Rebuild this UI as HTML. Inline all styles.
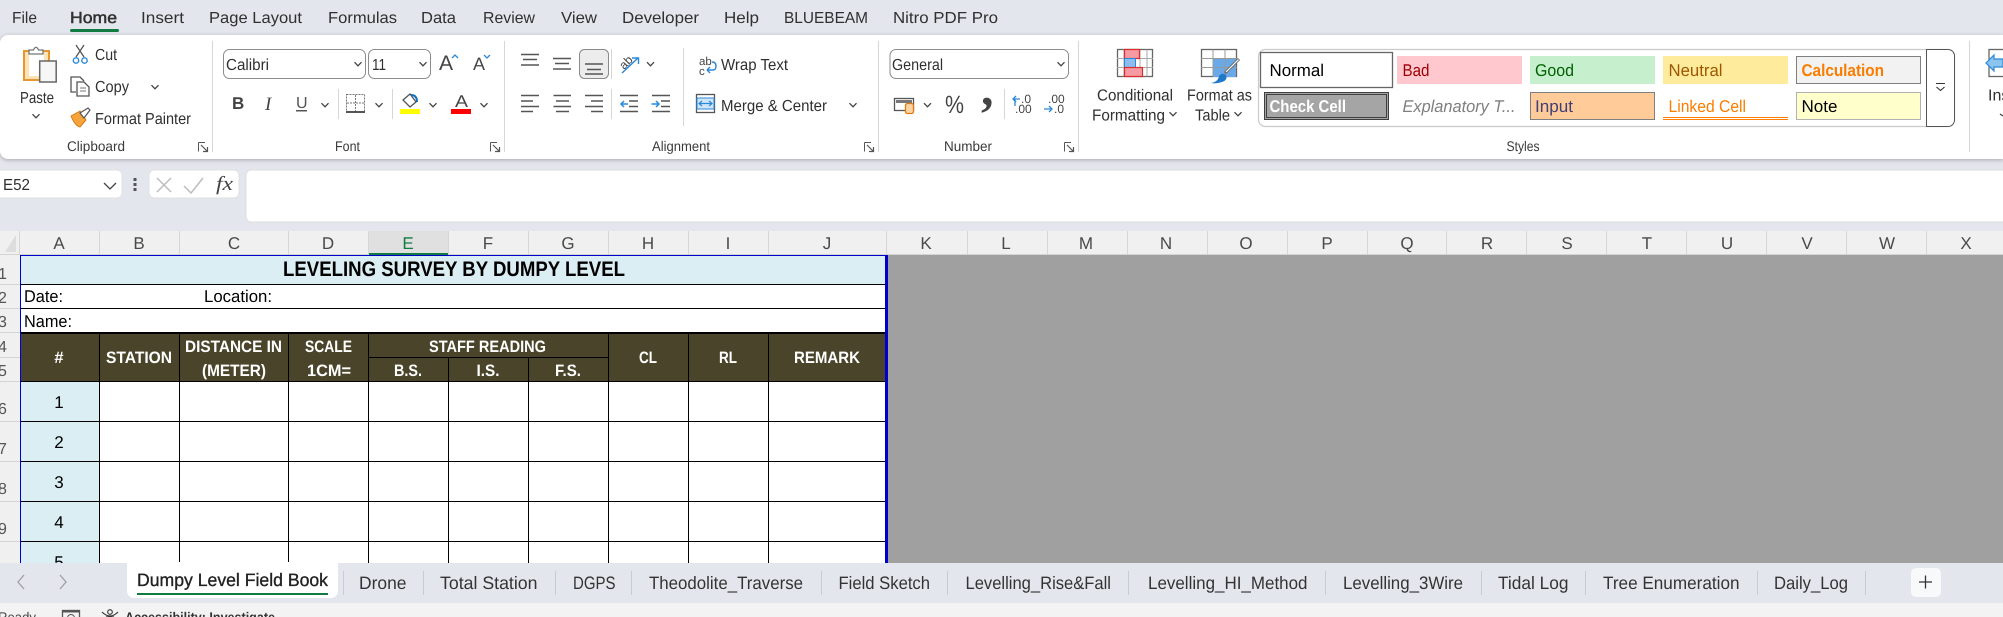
<!DOCTYPE html>
<html><head><meta charset="utf-8"><title>Dumpy Level Field Book</title>
<style>
html,body{margin:0;padding:0;width:2003px;height:617px;overflow:hidden;background:#e4e6ed}
svg{display:block}
text{font-family:"Liberation Sans",sans-serif;fill:#2b2b2b;font-size:15px;text-rendering:geometricPrecision}
.r{font-size:16px;fill:#303030}
.l{font-size:14px;fill:#3a3a3a}
.h{font-size:17px;fill:#4a4a4a;text-anchor:middle}
.w{font-weight:bold;font-size:16.5px;fill:#fff}
.c{font-size:17px;fill:#000}
.tb{font-size:18px;fill:#333}
.rn{font-size:16px;fill:#555}
.ln{stroke:#555;stroke-width:1.4;fill:none}
.ch{stroke:#444;stroke-width:1.3;fill:none}
</style></head><body>
<svg xmlns="http://www.w3.org/2000/svg" width="2003" height="617" viewBox="0 0 2003 617">
<defs>
<path id="c" d="M-3.5-1.8 0 1.8 3.5-1.8" class="ch"/>
<g id="lc"><path d="M.5 .5H7M.5 .5V9.5M.5 9.5" stroke="#555" stroke-width="1" fill="none"/><path d="M3 3 9 9M5 9.5H9.5V5" stroke="#555" stroke-width="1.2" fill="none"/></g>
</defs>
<rect width="2003" height="617" fill="#e4e6ed"/>

<!-- menu tabs -->
<text class="r" x="12" y="23" textLength="25" lengthAdjust="spacingAndGlyphs">File</text>
<text class="r" x="70" y="23" textLength="47" lengthAdjust="spacingAndGlyphs" style="stroke:#303030;stroke-width:.5">Home</text>
<rect x="70" y="29" width="49" height="3" rx="1.5" fill="#107c41"/>
<text class="r" x="141" y="23" textLength="43" lengthAdjust="spacingAndGlyphs">Insert</text>
<text class="r" x="209" y="23" textLength="93" lengthAdjust="spacingAndGlyphs">Page Layout</text>
<text class="r" x="328" y="23" textLength="69" lengthAdjust="spacingAndGlyphs">Formulas</text>
<text class="r" x="421" y="23" textLength="35" lengthAdjust="spacingAndGlyphs">Data</text>
<text class="r" x="483" y="23" textLength="52" lengthAdjust="spacingAndGlyphs">Review</text>
<text class="r" x="561" y="23" textLength="36" lengthAdjust="spacingAndGlyphs">View</text>
<text class="r" x="622" y="23" textLength="77" lengthAdjust="spacingAndGlyphs">Developer</text>
<text class="r" x="724" y="23" textLength="35" lengthAdjust="spacingAndGlyphs">Help</text>
<text class="r" x="784" y="23" textLength="84" lengthAdjust="spacingAndGlyphs">BLUEBEAM</text>
<text class="r" x="893" y="23" textLength="105" lengthAdjust="spacingAndGlyphs">Nitro PDF Pro</text>

<!-- ribbon -->
<path d="M8 35H2003V159H8A8 8 0 0 1 0 151V43A8 8 0 0 1 8 35Z" fill="#fff" style="filter:drop-shadow(0 1.5px 2px rgba(0,0,0,.28))"/>
<g fill="#d6d6d6">
<rect x="212" y="41" width="1" height="111"/><rect x="504" y="41" width="1" height="111"/><rect x="878" y="41" width="1" height="111"/><rect x="1078" y="41" width="1" height="111"/><rect x="1969" y="41" width="1" height="111"/>
<rect x="338" y="89" width="1" height="30"/><rect x="392" y="89" width="1" height="30"/><rect x="611" y="49" width="1" height="30"/><rect x="611" y="89" width="1" height="30"/><rect x="683" y="48" width="1" height="78"/><rect x="1004" y="89" width="1" height="30"/>
</g>

<!-- clipboard -->
<rect x="24" y="51" width="25" height="29" fill="#fbe3b5" stroke="#e8962e" stroke-width="2"/>
<rect x="29" y="54" width="15" height="22" fill="#fff"/>
<path d="M29 54V50H33.5Q36 44.5 38.500 50H43V54Z" fill="#fff" stroke="#777" stroke-width="1.3"/>
<rect x="39.700" y="61" width="16.500" height="21" fill="#f6f6f6" stroke="#666" stroke-width="1.500"/>
<text class="r" x="20" y="103" textLength="34" lengthAdjust="spacingAndGlyphs">Paste</text>
<use href="#c" x="36" y="116"/>
<path d="M76 45 84 57M84 45 76 57" stroke="#555" stroke-width="1.300" fill="none"/>
<circle cx="76" cy="60.500" r="2.700" fill="none" stroke="#2b88d8" stroke-width="1.400"/><circle cx="84.500" cy="60.500" r="2.700" fill="none" stroke="#2b88d8" stroke-width="1.400"/>
<text class="r" x="95" y="60" textLength="22" lengthAdjust="spacingAndGlyphs">Cut</text>
<path d="M76 92H71V77H80L84 81" fill="none" stroke="#555" stroke-width="1.300"/>
<path d="M77 82H84L89 87V96H77Z" fill="#fff" stroke="#555" stroke-width="1.300"/><path d="M80 88H86M80 91H86" stroke="#777"/>
<text class="r" x="95" y="92" textLength="34" lengthAdjust="spacingAndGlyphs">Copy</text>
<use href="#c" x="155" y="87"/>
<path d="M71 116 80 111 86 120 80 127Q75 126 71 116Z" fill="#f6a33a" stroke="#d47a17" stroke-width="1"/>
<path d="M80 113 88 108 90 110 84 118Z" fill="#fff" stroke="#555" stroke-width="1.200"/>
<text class="r" x="95" y="124" textLength="96" lengthAdjust="spacingAndGlyphs">Format Painter</text>
<text class="l" x="67" y="151" textLength="58" lengthAdjust="spacingAndGlyphs">Clipboard</text>
<use href="#lc" x="198" y="142"/>

<!-- font -->
<rect x="223.500" y="49.500" width="142" height="29" rx="6" fill="#fff" stroke="#8c8c8c"/>
<rect x="368.500" y="49.500" width="62" height="29" rx="6" fill="#fff" stroke="#8c8c8c"/>
<text class="r" x="226" y="70" textLength="43" lengthAdjust="spacingAndGlyphs">Calibri</text>
<text class="r" x="372" y="70" textLength="14" lengthAdjust="spacingAndGlyphs">11</text>
<use href="#c" x="358" y="64"/><use href="#c" x="423" y="64"/>
<text x="439" y="70" style="font-size:21px;fill:#444">A</text>
<path d="M452 58 455 55 458 58" stroke="#2b88d8" stroke-width="1.300" fill="none"/>
<text x="473" y="70" style="font-size:18px;fill:#444">A</text>
<path d="M484 55 487 58 490 55" stroke="#2b88d8" stroke-width="1.300" fill="none"/>
<text x="232" y="109" style="font-size:17px;font-weight:bold;fill:#444">B</text>
<text x="265" y="110" style="font-size:19px;font-style:italic;fill:#444;font-family:'Liberation Serif',serif">I</text>
<text x="296" y="108" style="font-size:16px;fill:#555">U</text>
<rect x="296" y="110" width="11" height="1.500" fill="#555"/>
<use href="#c" x="325" y="105"/>
<g fill="none" stroke="#777" stroke-dasharray="2 1"><rect x="346.500" y="94.500" width="18" height="17"/><path d="M355.500 95V112M347 103H364"/></g>
<rect x="346" y="111" width="19" height="2" fill="#555"/>
<use href="#c" x="379" y="105"/>
<path d="M403 100 410 94 416 102 410 107Z" fill="#fff" stroke="#555" stroke-width="1.300"/><path d="M411 95Q417 95 417 102" stroke="#106ebe" stroke-width="2" fill="none"/>
<rect x="400" y="109" width="20" height="5" fill="#ffff00"/>
<use href="#c" x="433" y="105"/>
<text x="455" y="107" style="font-size:17px;fill:#444" textLength="13" lengthAdjust="spacingAndGlyphs">A</text>
<rect x="451" y="109" width="20" height="5" fill="#ff0000"/>
<use href="#c" x="484" y="105"/>
<text class="l" x="335" y="151" textLength="25" lengthAdjust="spacingAndGlyphs">Font</text>
<use href="#lc" x="490" y="142"/>

<!-- alignment -->
<rect x="579.500" y="49.500" width="29" height="29" rx="5" fill="#ececec" stroke="#8a8a8a"/>
<path class="ln" d="M521 54.500H539M523 59.500H537M521 65H539M553 58.500H571M555 63.500H569M553 69H571M585 64H603M587 69.500H601M585 74H603"/>
<path class="ln" d="M521 95.500H539M521 101H533M521 106.500H539M521 111.500H533"/>
<path class="ln" d="M553.500 95.500H571M556 101H569M553.500 106.500H571M556 111.500H569"/>
<path class="ln" d="M585 95.500H603M591 101H603M585 106.500H603M591 111.500H603"/>
<text x="0" y="0" transform="translate(624 70) rotate(-45)" style="font-size:12px;fill:#444">ab</text>
<path d="M622 73 638 58M632 58H638.500V64" stroke="#2b88d8" stroke-width="1.400" fill="none"/>
<use href="#c" x="650.500" y="64"/>
<path class="ln" d="M620 95.500H638M629 101H638M629 106.500H638M620 111.500H638M652 95.500H670M661 101H670M661 106.500H670M652 111.500H670"/>
<path d="M628 104H621M624 101 621 104 624 107M651.500 104H659M656 101 659 104 656 107" stroke="#2b88d8" stroke-width="1.500" fill="none"/>
<text x="699" y="65" style="font-size:11.500px;fill:#444">ab</text>
<text x="699" y="75" style="font-size:11.500px;fill:#444">c</text>
<path d="M707 70H713Q716 70 716 66Q716 62 712 62M707 70 710 67M707 70 710 73" stroke="#2b88d8" stroke-width="1.400" fill="none"/>
<text class="r" x="721" y="70" textLength="67" lengthAdjust="spacingAndGlyphs">Wrap Text</text>
<rect x="696.500" y="94.500" width="18" height="18" fill="#fff" stroke="#555" stroke-width="1.300"/>
<rect x="697" y="98" width="17" height="11" fill="#cfe6fa" stroke="#2b88d8"/>
<path d="M699 103.500H712M702 101 699 103.500 702 106M709 101 712 103.500 709 106" stroke="#2b88d8" stroke-width="1.200" fill="none"/>
<text class="r" x="721" y="111" textLength="106" lengthAdjust="spacingAndGlyphs">Merge &amp; Center</text>
<use href="#c" x="853" y="105"/>
<text class="l" x="652" y="151" textLength="58" lengthAdjust="spacingAndGlyphs">Alignment</text>
<use href="#lc" x="864" y="142"/>

<!-- number -->
<rect x="890" y="49.500" width="178.500" height="29" rx="6" fill="#fff" stroke="#8c8c8c"/>
<text class="r" x="892" y="70" textLength="51" lengthAdjust="spacingAndGlyphs">General</text>
<use href="#c" x="1061" y="64"/>
<rect x="894.500" y="98.500" width="19" height="12" fill="#fff" stroke="#555" stroke-width="1.300"/>
<rect x="896" y="100" width="16" height="3" fill="#777"/>
<rect x="905.500" y="103.500" width="8" height="10" rx="2" fill="#fbd3a5" stroke="#e07a10" stroke-width="1.300"/>
<use href="#c" x="927.500" y="105"/>
<text x="945" y="113" style="font-size:25px;fill:#444" textLength="19" lengthAdjust="spacingAndGlyphs">%</text>
<text x="981" y="105" style="font-size:50px;font-weight:bold;fill:#444;font-family:'Liberation Serif',serif">,</text>
<text x="1021" y="103" style="font-size:12px;fill:#444">.0</text>
<text x="1015" y="113" style="font-size:12px;fill:#444">.00</text>
<path d="M1020 99H1013M1016 96 1013 99 1016 102M1015 99V106" stroke="#2b88d8" stroke-width="1.300" fill="none"/>
<text x="1048" y="103" style="font-size:12px;fill:#444">.00</text>
<text x="1054" y="113" style="font-size:12px;fill:#444">.0</text>
<path d="M1044 109H1052M1049 106 1052 109 1049 112" stroke="#2b88d8" stroke-width="1.300" fill="none"/>
<text class="l" x="944" y="151" textLength="48" lengthAdjust="spacingAndGlyphs">Number</text>
<use href="#lc" x="1064" y="142"/>

<!-- conditional formatting icon -->
<rect x="1117.500" y="49.500" width="35" height="27" fill="#fff" stroke="#666" stroke-width="1.300"/>
<path d="M1124 49.500V76.500M1147 49.500V76.500M1117 58.500H1153M1117 67.500H1153M1140 50V76" stroke="#aaa"/>
<rect x="1124.500" y="49.500" width="15" height="9" fill="#f79aa3" stroke="#d92c2c" stroke-width="1.200"/>
<rect x="1124.500" y="58.500" width="11" height="9" fill="#8cbdee" stroke="#2b88d8"/>
<rect x="1124.500" y="67.500" width="18" height="9" fill="#f79aa3" stroke="#d92c2c" stroke-width="1.200"/>
<text class="r" x="1097" y="100.500" textLength="76" lengthAdjust="spacingAndGlyphs">Conditional</text>
<text class="r" x="1092" y="120.500" textLength="73" lengthAdjust="spacingAndGlyphs">Formatting</text>
<use href="#c" x="1173" y="114"/>

<!-- format as table icon -->
<rect x="1201.500" y="49.500" width="35" height="27" fill="#fff" stroke="#666" stroke-width="1.300"/>
<rect x="1213" y="58" width="23" height="19" fill="#6aa9e8"/>
<path d="M1213 49.500V76.500M1225 49.500V76.500M1201 58.500H1237M1201 67.500H1237" stroke="#999"/>
<path d="M1239 59 1225 73" stroke="#666" stroke-width="3"/><path d="M1238.500 59.500 1226 72" stroke="#fff" stroke-width="1.200"/>
<path d="M1211 83Q1218 82 1219 76Q1222 72 1226 75Q1228 80 1222 82Q1216 84 1211 83Z" fill="#1f78c8"/>
<text class="r" x="1187" y="100.500" textLength="65" lengthAdjust="spacingAndGlyphs">Format as</text>
<text class="r" x="1195" y="120.500" textLength="35" lengthAdjust="spacingAndGlyphs">Table</text>
<use href="#c" x="1238" y="114"/>

<!-- styles gallery -->
<rect x="1258.500" y="49.500" width="696" height="77" rx="7" fill="#fff" stroke="#cacaca" stroke-width="1.200"/>
<path d="M1926.500 49.500H1948A6.500 6.500 0 0 1 1954.500 56V120A6.500 6.500 0 0 1 1948 126.500H1926.500Z" fill="#fff" stroke="#555"/>
<path d="M1936 83.500H1945M1936.500 87 1940.500 90.500 1944.500 87" stroke="#333" stroke-width="1.100" fill="none"/>
<rect x="1260.500" y="52.500" width="132" height="35" fill="#fff" stroke="#666" stroke-width="1.300"/>
<text class="c" x="1269.500" y="76" textLength="54.500" lengthAdjust="spacingAndGlyphs">Normal</text>
<rect x="1397" y="56" width="125" height="28" fill="#ffc7ce"/>
<text x="1402.500" y="76" style="font-size:17px;fill:#9c0006" textLength="27" lengthAdjust="spacingAndGlyphs">Bad</text>
<rect x="1530" y="56" width="125" height="28" fill="#c6efce"/>
<text x="1535" y="76" style="font-size:17px;fill:#006100" textLength="39" lengthAdjust="spacingAndGlyphs">Good</text>
<rect x="1663" y="56" width="125" height="28" fill="#ffeb9c"/>
<text x="1668.500" y="76" style="font-size:17px;fill:#9c5700" textLength="54" lengthAdjust="spacingAndGlyphs">Neutral</text>
<rect x="1796.500" y="56.500" width="124" height="27" fill="#f2f2f2" stroke="#7f7f7f"/>
<text x="1801.500" y="76" style="font-size:17px;font-weight:bold;fill:#fa7d00" textLength="82.500" lengthAdjust="spacingAndGlyphs">Calculation</text>
<rect x="1264.500" y="92.500" width="124" height="27" fill="#a5a5a5" stroke="#3f3f3f"/>
<rect x="1266.500" y="94.500" width="120" height="23" fill="none" stroke="#3f3f3f"/>
<text x="1269.500" y="112" style="font-size:17px;font-weight:bold;fill:#fff" textLength="76.500" lengthAdjust="spacingAndGlyphs">Check Cell</text>
<text x="1402.500" y="112" style="font-size:17px;font-style:italic;fill:#7f7f7f" textLength="113" lengthAdjust="spacingAndGlyphs">Explanatory T...</text>
<rect x="1530.500" y="92.500" width="124" height="27" fill="#ffcc99" stroke="#7f7f7f"/>
<text x="1535" y="112" style="font-size:17px;fill:#3f3f76" textLength="38" lengthAdjust="spacingAndGlyphs">Input</text>
<text x="1668.500" y="112" style="font-size:17px;fill:#fa7d00" textLength="77.500" lengthAdjust="spacingAndGlyphs">Linked Cell</text>
<path d="M1663 117.500H1788M1663 119.500H1788" stroke="#ff8001"/>
<rect x="1796.500" y="92.500" width="124" height="27" fill="#ffffcc" stroke="#b2b2b2"/>
<text class="c" x="1801.500" y="112" textLength="36" lengthAdjust="spacingAndGlyphs">Note</text>
<text class="l" x="1506.500" y="151" textLength="33" lengthAdjust="spacingAndGlyphs">Styles</text>

<!-- insert icon -->
<rect x="1989" y="49.500" width="20" height="27" fill="#fff" stroke="#666" stroke-width="1.300"/>
<path d="M1986 63 1994 55V59H2003V67H1994V71Z" fill="#8cc4f0" stroke="#2b88d8" stroke-width="1.200"/>
<text class="r" x="1988" y="100.500">Inse</text>
<path d="M2000 114 2003 116" class="ch"/>

<!-- formula bar -->
<rect x="-6" y="170" width="128" height="28" rx="5" fill="#fff" stroke="#e0e0e0"/>
<text class="r" x="3" y="190" textLength="27" lengthAdjust="spacingAndGlyphs">E52</text>
<path d="M104 183 110 189 116 183" stroke="#444" stroke-width="1.300" fill="none"/>
<g fill="#555"><rect x="133.500" y="178" width="3" height="3"/><rect x="133.500" y="183" width="3" height="3"/><rect x="133.500" y="188" width="3" height="3"/></g>
<rect x="149" y="170" width="90" height="28" rx="5" fill="#fff" stroke="#e0e0e0"/>
<path d="M157 178 171 192M171 178 157 192" stroke="#bdbdbd" stroke-width="1.500" fill="none"/>
<path d="M184 186 191 193 203 178" stroke="#bdbdbd" stroke-width="1.500" fill="none"/>
<text x="216" y="190" style="font-size:20px;font-style:italic;font-family:'Liberation Serif',serif;fill:#444" textLength="17" lengthAdjust="spacingAndGlyphs">fx</text>
<rect x="246" y="170" width="1780" height="52" rx="5" fill="#fff" stroke="#dcdcdc"/>

<!-- column headers -->
<rect x="0" y="231" width="2003" height="24" fill="#f0f0f0"/>
<rect x="0" y="254" width="2003" height="1" fill="#d4d4d4"/>
<rect x="368" y="231" width="80" height="24" fill="#e0e0e0"/>
<rect x="368" y="253" width="80" height="2" fill="#107c41"/>
<path d="M5 252H16V235Z" fill="#dddddd"/>
<g fill="#d6d6d6">
<rect x="19" y="231" width="1" height="24"/><rect x="99" y="231" width="1" height="24"/><rect x="179" y="231" width="1" height="24"/><rect x="288" y="231" width="1" height="24"/><rect x="368" y="231" width="1" height="24"/><rect x="448" y="231" width="1" height="24"/><rect x="528" y="231" width="1" height="24"/><rect x="608" y="231" width="1" height="24"/><rect x="688" y="231" width="1" height="24"/><rect x="768" y="231" width="1" height="24"/><rect x="886" y="231" width="1" height="24"/><rect x="967" y="231" width="1" height="24"/><rect x="1047" y="231" width="1" height="24"/><rect x="1127" y="231" width="1" height="24"/><rect x="1207" y="231" width="1" height="24"/><rect x="1287" y="231" width="1" height="24"/><rect x="1367" y="231" width="1" height="24"/><rect x="1446" y="231" width="1" height="24"/><rect x="1526" y="231" width="1" height="24"/><rect x="1606" y="231" width="1" height="24"/><rect x="1686" y="231" width="1" height="24"/><rect x="1766" y="231" width="1" height="24"/><rect x="1846" y="231" width="1" height="24"/><rect x="1926" y="231" width="1" height="24"/>
</g>
<text class="h" x="59" y="249">A</text><text class="h" x="139" y="249">B</text><text class="h" x="234" y="249">C</text><text class="h" x="328" y="249">D</text>
<text class="h" x="408" y="249" style="fill:#107c41">E</text>
<text class="h" x="488" y="249">F</text><text class="h" x="568" y="249">G</text><text class="h" x="648" y="249">H</text><text class="h" x="728" y="249">I</text><text class="h" x="827" y="249">J</text><text class="h" x="926" y="249">K</text><text class="h" x="1006" y="249">L</text><text class="h" x="1086" y="249">M</text><text class="h" x="1166" y="249">N</text><text class="h" x="1246" y="249">O</text><text class="h" x="1327" y="249">P</text><text class="h" x="1407" y="249">Q</text><text class="h" x="1487" y="249">R</text><text class="h" x="1567" y="249">S</text><text class="h" x="1647" y="249">T</text><text class="h" x="1727" y="249">U</text><text class="h" x="1807" y="249">V</text><text class="h" x="1887" y="249">W</text><text class="h" x="1966" y="249">X</text>

<!-- row headers -->
<rect x="0" y="255" width="20" height="308" fill="#f0f0f0"/>
<g fill="#d4d4d4">
<rect y="284" width="20" height="1"/><rect y="308" width="20" height="1"/><rect y="332" width="20" height="1"/><rect y="357" width="20" height="1"/><rect y="381" width="20" height="1"/><rect y="421" width="20" height="1"/><rect y="461" width="20" height="1"/><rect y="501" width="20" height="1"/><rect y="541" width="20" height="1"/>
</g>
<text class="rn" x="-2" y="279">1</text><text class="rn" x="-2" y="303">2</text><text class="rn" x="-2" y="327">3</text><text class="rn" x="-2" y="352">4</text><text class="rn" x="-2" y="376">5</text><text class="rn" x="-2" y="414">6</text><text class="rn" x="-2" y="454">7</text><text class="rn" x="-2" y="494">8</text><text class="rn" x="-2" y="534">9</text>

<!-- sheet -->
<rect x="888" y="255" width="1115" height="308" fill="#a0a0a0"/>
<rect x="21" y="256" width="864" height="307" fill="#fff"/>
<rect x="21" y="256" width="864" height="28" fill="#daeef3"/>
<rect x="21" y="333" width="864" height="48" fill="#4a452a"/>
<rect x="21" y="382" width="78" height="181" fill="#daeef3"/>
<g fill="#000">
<rect x="21" y="284" width="864" height="1"/><rect x="21" y="308" width="864" height="1"/><rect x="21" y="332" width="864" height="2"/><rect x="21" y="381" width="864" height="1"/><rect x="21" y="421" width="864" height="1"/><rect x="21" y="461" width="864" height="1"/><rect x="21" y="501" width="864" height="1"/><rect x="21" y="541" width="864" height="1"/>
<rect x="368" y="357" width="240" height="1"/>
<rect x="99" y="333" width="1" height="230"/><rect x="179" y="333" width="1" height="230"/><rect x="288" y="333" width="1" height="230"/><rect x="368" y="333" width="1" height="230"/><rect x="448" y="357" width="1" height="206"/><rect x="528" y="357" width="1" height="206"/><rect x="608" y="333" width="1" height="230"/><rect x="688" y="333" width="1" height="230"/><rect x="768" y="333" width="1" height="230"/>
</g>
<rect x="20" y="255" width="868" height="1" fill="#0000cd"/>
<rect x="20" y="255" width="1" height="308" fill="#0000cd"/>
<rect x="885" y="255" width="3" height="308" fill="#0000cd"/>
<text x="283" y="276" style="font-size:21px;font-weight:bold;fill:#000" textLength="342" lengthAdjust="spacingAndGlyphs">LEVELING SURVEY BY DUMPY LEVEL</text>
<text class="c" x="24" y="302" textLength="39" lengthAdjust="spacingAndGlyphs">Date:</text>
<text class="c" x="204" y="302" textLength="68" lengthAdjust="spacingAndGlyphs">Location:</text>
<text class="c" x="24" y="327" textLength="48" lengthAdjust="spacingAndGlyphs">Name:</text>
<text class="w" x="59" y="363" text-anchor="middle">#</text>
<text class="w" x="106" y="363" textLength="66" lengthAdjust="spacingAndGlyphs">STATION</text>
<text class="w" x="185" y="352" textLength="97" lengthAdjust="spacingAndGlyphs">DISTANCE IN</text>
<text class="w" x="202" y="376" textLength="64" lengthAdjust="spacingAndGlyphs">(METER)</text>
<text class="w" x="305" y="352" textLength="47" lengthAdjust="spacingAndGlyphs">SCALE</text>
<text class="w" x="307" y="376" textLength="44" lengthAdjust="spacingAndGlyphs">1CM=</text>
<text class="w" x="429" y="352" textLength="117" lengthAdjust="spacingAndGlyphs">STAFF READING</text>
<text class="w" x="394" y="376" textLength="28" lengthAdjust="spacingAndGlyphs">B.S.</text>
<text class="w" x="476.500" y="376" textLength="23" lengthAdjust="spacingAndGlyphs">I.S.</text>
<text class="w" x="555" y="376" textLength="26" lengthAdjust="spacingAndGlyphs">F.S.</text>
<text class="w" x="639" y="363" textLength="18" lengthAdjust="spacingAndGlyphs">CL</text>
<text class="w" x="719" y="363" textLength="18" lengthAdjust="spacingAndGlyphs">RL</text>
<text class="w" x="794" y="363" textLength="66" lengthAdjust="spacingAndGlyphs">REMARK</text>
<text class="c" x="59" y="408" text-anchor="middle">1</text><text class="c" x="59" y="448" text-anchor="middle">2</text><text class="c" x="59" y="488" text-anchor="middle">3</text><text class="c" x="59" y="528" text-anchor="middle">4</text><text class="c" x="59" y="568" text-anchor="middle">5</text>

<!-- sheet tabs -->
<rect x="0" y="563" width="2003" height="40" fill="#e4e6ed"/>
<rect x="0" y="603" width="2003" height="14" fill="#f3f3f3"/>
<path d="M127 562H338V591A7 7 0 0 1 331 598H134A7 7 0 0 1 127 591Z" fill="#fff"/>
<path d="M24 575 18 582 24 589" stroke="#a0a0a0" stroke-width="1.300" fill="none"/>
<path d="M60 575 66 582 60 589" stroke="#a0a0a0" stroke-width="1.300" fill="none"/>
<text x="137" y="586" style="font-size:18px;fill:#222;stroke:#222;stroke-width:.35" textLength="191" lengthAdjust="spacingAndGlyphs">Dumpy Level Field Book</text>
<rect x="137" y="593" width="191" height="2" fill="#107c41"/>
<g fill="#c9cbd1">
<rect x="343" y="571" width="1" height="24"/><rect x="423" y="571" width="1" height="24"/><rect x="555" y="571" width="1" height="24"/><rect x="631" y="571" width="1" height="24"/><rect x="821" y="571" width="1" height="24"/><rect x="947" y="571" width="1" height="24"/><rect x="1128" y="571" width="1" height="24"/><rect x="1325" y="571" width="1" height="24"/><rect x="1481" y="571" width="1" height="24"/><rect x="1585" y="571" width="1" height="24"/><rect x="1757" y="571" width="1" height="24"/><rect x="1865" y="571" width="1" height="24"/>
</g>
<text class="tb" x="359" y="589" textLength="47.500" lengthAdjust="spacingAndGlyphs">Drone</text>
<text class="tb" x="440" y="589" textLength="97.500" lengthAdjust="spacingAndGlyphs">Total Station</text>
<text class="tb" x="573" y="589" textLength="42.500" lengthAdjust="spacingAndGlyphs">DGPS</text>
<text class="tb" x="649" y="589" textLength="154" lengthAdjust="spacingAndGlyphs">Theodolite_Traverse</text>
<text class="tb" x="838.500" y="589" textLength="91.500" lengthAdjust="spacingAndGlyphs">Field Sketch</text>
<text class="tb" x="965.500" y="589" textLength="145.500" lengthAdjust="spacingAndGlyphs">Levelling_Rise&amp;Fall</text>
<text class="tb" x="1148" y="589" textLength="159.500" lengthAdjust="spacingAndGlyphs">Levelling_HI_Method</text>
<text class="tb" x="1343" y="589" textLength="120" lengthAdjust="spacingAndGlyphs">Levelling_3Wire</text>
<text class="tb" x="1498" y="589" textLength="70.500" lengthAdjust="spacingAndGlyphs">Tidal Log</text>
<text class="tb" x="1603" y="589" textLength="136.500" lengthAdjust="spacingAndGlyphs">Tree Enumeration</text>
<text class="tb" x="1774" y="589" textLength="74" lengthAdjust="spacingAndGlyphs">Daily_Log</text>
<rect x="1911" y="568" width="30" height="29" rx="5" fill="#f8f9fb"/>
<path d="M1919 582H1932M1925.500 575.500V588.500" stroke="#333" stroke-width="1.300"/>

<!-- status bar -->
<text x="-2" y="622" style="font-size:14px;fill:#444" textLength="38" lengthAdjust="spacingAndGlyphs">Ready</text>
<rect x="62.500" y="610.500" width="17" height="10" fill="none" stroke="#555" stroke-width="1.300"/>
<rect x="62" y="610" width="18" height="2.500" fill="#555"/>
<circle cx="71" cy="618" r="3.500" fill="none" stroke="#555"/>
<circle cx="110" cy="612" r="2.300" fill="none" stroke="#333" stroke-width="1.100"/>
<path d="M102 612Q106 616 110 616Q114 616 118 612M106 617H114" fill="none" stroke="#333" stroke-width="1.200"/>
<text x="125" y="622" style="font-size:14px;font-weight:bold;fill:#333" textLength="150" lengthAdjust="spacingAndGlyphs">Accessibility: Investigate</text>
</svg>
</body></html>
